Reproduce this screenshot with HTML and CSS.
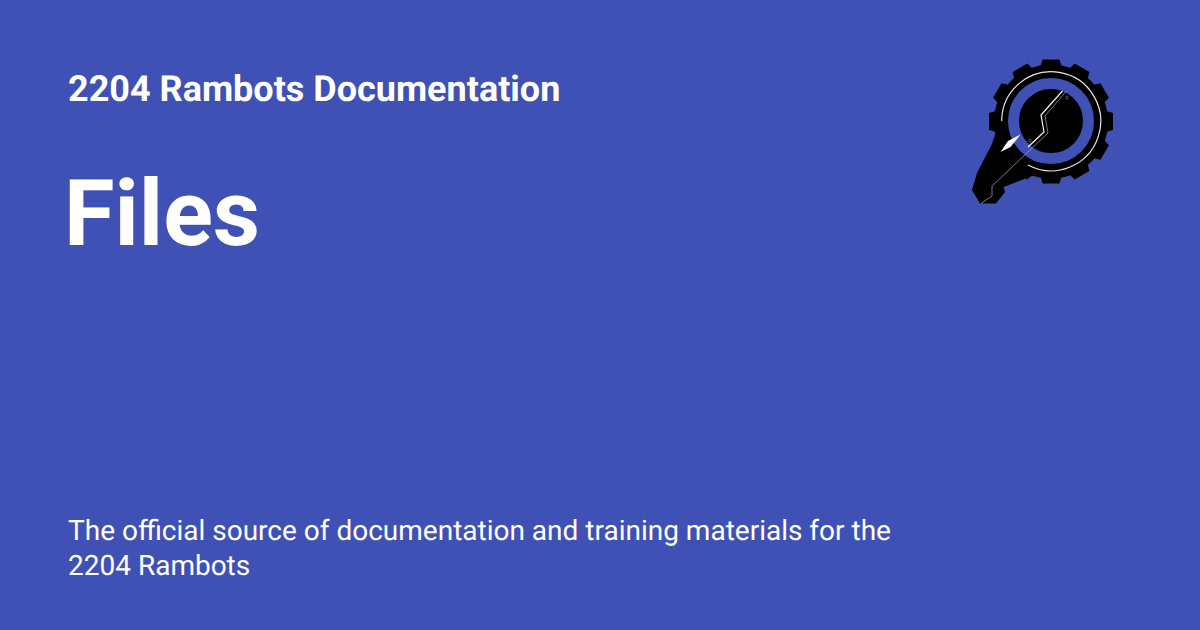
FILE: index.html
```html
<!DOCTYPE html>
<html lang="en">
<head>
<meta charset="utf-8">
<title>Files</title>
<link rel="stylesheet" href="styles.css">
</head>
<body>
<main class="card">
  <header class="top">
    <div class="titles">
      <div class="site">2204 Rambots Documentation</div>
      <h1 class="page">Files</h1>
    </div>
    <svg class="logo" viewBox="970 58 146 148" width="146" height="148" aria-hidden="true">
      <defs>
        <polygon id="tooth" points="1042.500,59.500 1059.500,59.500 1062.500,70 1039.500,70"/>
      </defs>
      <g fill="#000">
        <circle cx="1051" cy="121.500" r="57"/>
        <use href="#tooth"/>
        <use href="#tooth" transform="rotate(30 1051 121.500)"/>
        <use href="#tooth" transform="rotate(60 1051 121.500)"/>
        <use href="#tooth" transform="rotate(90 1051 121.500)"/>
        <use href="#tooth" transform="rotate(120 1051 121.500)"/>
        <use href="#tooth" transform="rotate(150 1051 121.500)"/>
        <use href="#tooth" transform="rotate(180 1051 121.500)"/>
        <use href="#tooth" transform="rotate(210 1051 121.500)"/>
        <use href="#tooth" transform="rotate(240 1051 121.500)"/>
        <use href="#tooth" transform="rotate(270 1051 121.500)"/>
        <use href="#tooth" transform="rotate(300 1051 121.500)"/>
        <use href="#tooth" transform="rotate(330 1051 121.500)"/>
        <polygon points="997,128 992,144 977,173 972,190 980,203.500 996,203.500 1005,192 1003.500,187 1032,176 1050,172 1030,130"/>
      </g>
      <path class="arc" d="M1001.700 121 A49.500 49.500 0 1 1 1028 165"/>
      <circle class="ring" cx="1051" cy="121" r="37.500"/>
      <path class="feather" d="M1020.500 134.500 L1008 141 L1000.500 152 L1010.500 147 Z"/>
      <path class="wire" d="M1066.500 91 L1045 116 L1048 133 L992 186 L992 196 L981 203.500"/>
      <path class="zig" d="M1062.500 91 L1041 115 L1044 132 L1028 147"/>
      <circle class="dot" cx="1067" cy="97.500" r="1.400"/>
      <circle class="dot" cx="1030" cy="140.500" r="1.400"/>
    </svg>
  </header>
  <p class="desc">The official source of documentation and training materials for the 2204 Rambots</p>
</main>
</body>
</html>
```
FILE: styles.css
```css
html, body {
  margin: 0;
  padding: 0;
}
.card {
  box-sizing: border-box;
  width: 1200px;
  height: 630px;
  padding: 60px 84px 47px 68px;
  background: #3f51b5;
  color: #fff;
  font-family: Roboto, "Liberation Sans", sans-serif;
  text-rendering: geometricPrecision;
  display: flex;
  flex-direction: column;
  justify-content: space-between;
  overflow: hidden;
}
.top {
  display: flex;
  justify-content: space-between;
  align-items: flex-start;
}
.site {
  font-size: 36px;
  font-weight: 700;
  line-height: 59px;
}
.page {
  margin: 41px 0 0 -4px;
  font-size: 92px;
  font-weight: 700;
  line-height: 110px;
}
.logo {
  display: block;
  margin-top: -2px;
}
.desc {
  margin: 0;
  width: 860px;
  font-size: 28px;
  line-height: 35px;
}
.arc {
  fill: none;
  stroke: #e8e8e8;
  stroke-width: 1.2;
}
.ring {
  fill: none;
  stroke: #3f51b5;
  stroke-width: 11;
}
.feather {
  fill: #fff;
}
.wire {
  fill: none;
  stroke: #999;
  stroke-width: 0.8;
}
.zig {
  fill: none;
  stroke: #f4f4f4;
  stroke-width: 1.2;
}
.dot {
  fill: none;
  stroke: #777;
  stroke-width: 0.7;
}
```
